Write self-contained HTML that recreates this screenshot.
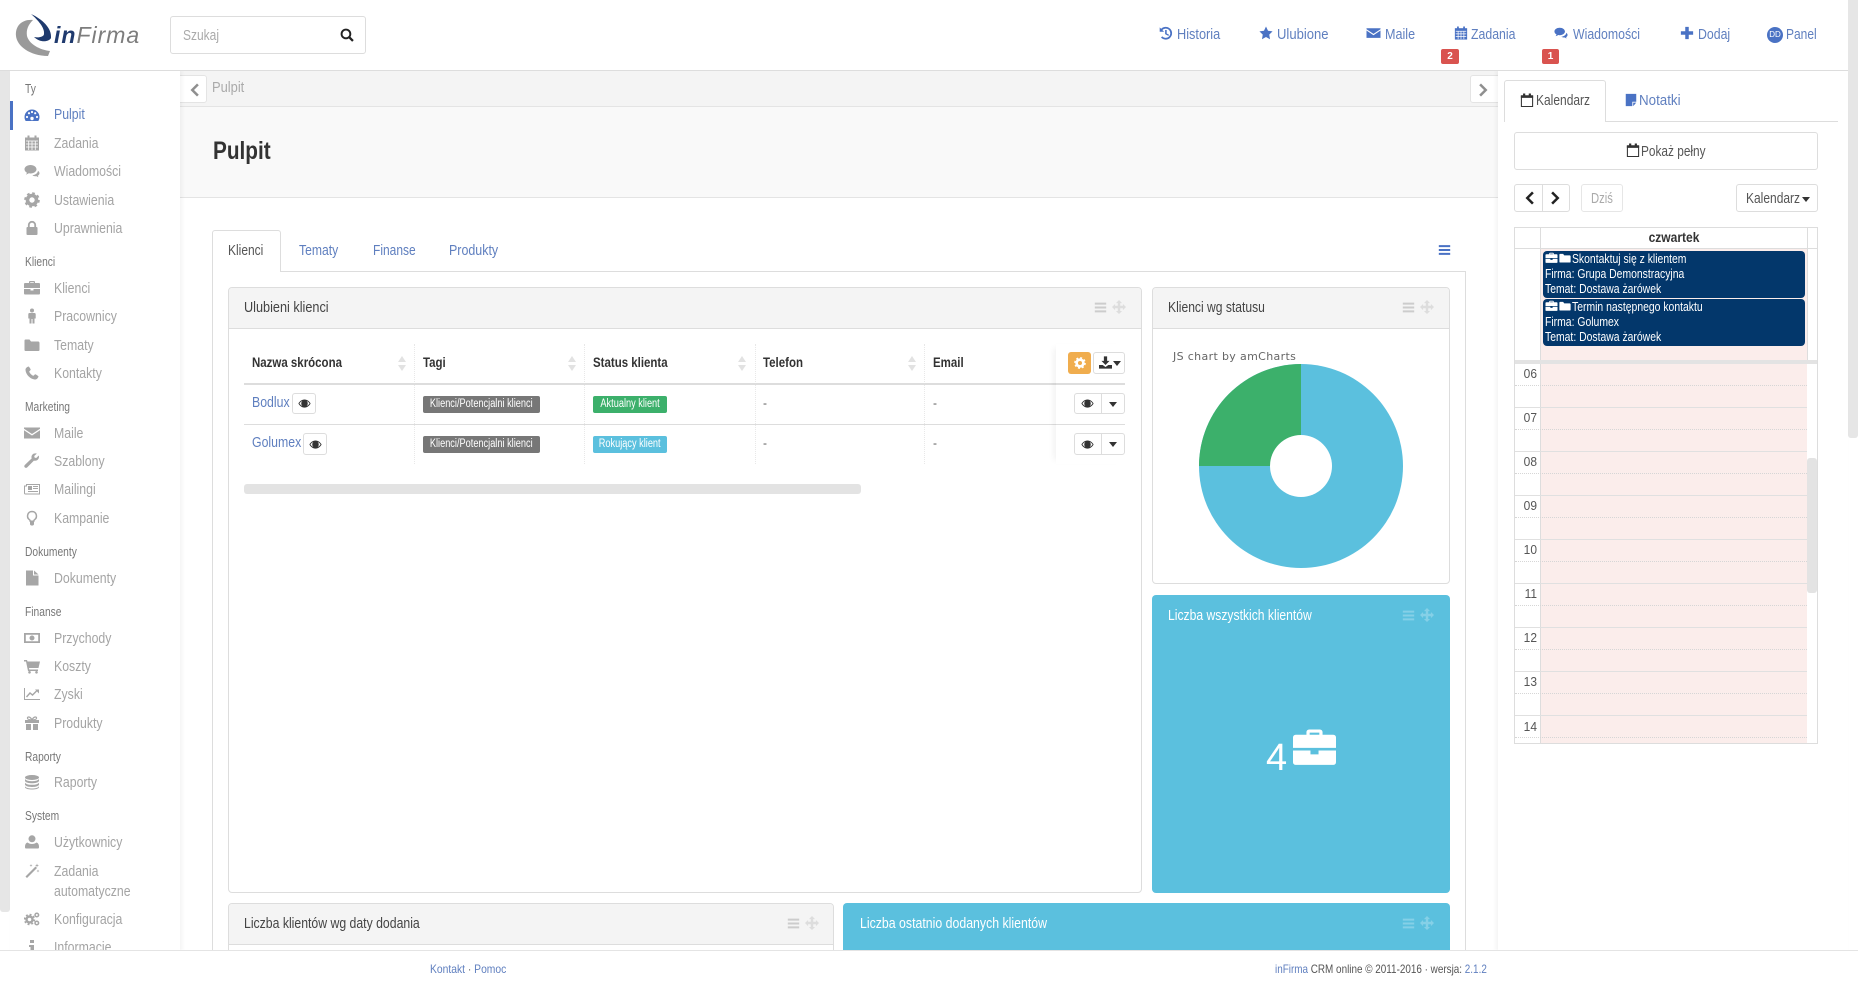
<!DOCTYPE html>
<html lang="pl"><head><meta charset="utf-8"><title>inFirma</title>
<style>
html,body{margin:0;padding:0;width:1858px;height:990px;overflow:hidden;background:#fff}
body{position:relative;font-family:"Liberation Sans",sans-serif;font-size:15px;color:#333}
.a{position:absolute;white-space:nowrap;line-height:20px;box-sizing:border-box}
svg.a{display:block;fill:currentColor;overflow:visible}
.s,.h,.n,.t,.th,.et,.x{transform:translateY(var(--y,1px)) scaleX(var(--k,.82));transform-origin:0 50%}
.s{left:54px;color:#a4a4a4;font-size:15px}
.h{left:25px;color:#777;font-size:12.5px;--k:.82}
.i{left:24px;width:16px;height:16px;color:#a6a6a6}
.n{color:#5f7fbf;font-size:15px;top:24px}
.ni{color:#4a72c4;width:14px;height:14px;top:26px}
.b{border:1px solid #ddd;border-radius:3px;background:#fff}
.p{border:1px solid #ddd;border-radius:4px;background:#fff}
.ph{background:#f4f4f4;border-bottom:1px solid #ddd}
.t{font-size:14.5px;color:#444;--k:.85}
.th{font-size:14px;font-weight:bold;color:#333;top:351px}
.l{background:#ddd}
.tag{height:17px;line-height:17px;border-radius:2px;color:#fff;font-size:11.5px;display:flex;justify-content:center}
.tag span{flex:none;display:block;transform:scaleX(.8)}
.ev{left:1543px;width:262px;background:#03376b;border-radius:4px}
.et{color:#fff;font-size:13px;line-height:16px;--k:.8;--y:0px}
.hr{left:1514px;width:26px;text-align:right;padding-right:3px;font-size:13px;color:#555;transform:scaleX(.92);transform-origin:88% 50%}
.ln{left:1515px;width:292px;height:1px;background:#e0e0e0}
.dt{left:1515px;width:292px;height:0;border-top:1px dotted #d6d6d6}
.vd{width:0;height:120px;top:344px;border-left:1px dotted #e8e8e8}
.ic{color:#ccc;width:13px;height:13px}
.mv{color:#ddd;width:14px;height:14px;margin-top:-1px}
</style></head><body>
<svg width="0" height="0" style="position:absolute"><defs>
<symbol id="dash" viewBox="0 0 16 16"><path d="M8 2.500A7.500 7.500 0 0 0 .5 10c0 1.500.4 2.900 1.200 4h12.600c.8-1.100 1.200-2.500 1.200-4A7.500 7.500 0 0 0 8 2.500z"/><g fill="#fff"><circle cx="3" cy="10" r="1.100"/><circle cx="5" cy="6.200" r="1.100"/><circle cx="8" cy="5" r="1.100"/><circle cx="13" cy="10" r="1.100"/><circle cx="11.200" cy="6.200" r="1.100"/><circle cx="8" cy="11.500" r="1.700"/></g></symbol>
<symbol id="cal" viewBox="0 0 16 16"><rect x="1" y="2.500" width="14" height="13"/><path fill="none" stroke="#fff" stroke-width=".8" d="M2 6h12M2 9h12M2 12h12M4.700 6v9M8 6v9M11.300 6v9"/><path d="M3.500.5h2v3h-2zM10.500.5h2v3h-2z"/></symbol>
<symbol id="calo" viewBox="0 0 16 16"><path fill="none" stroke="currentColor" stroke-width="1.200" d="M1.600 3.200h12.800v12.200H1.600z"/><path d="M1 3h14v2.500H1zM3.500.5H6V4H3.500zM10 .5h2.500V4H10z"/></symbol>
<symbol id="com" viewBox="0 0 16 16"><path d="M6.500 2C3.200 2 .5 3.900.5 6.300c0 1.400 1 2.700 2.400 3.400-.2.8-.6 1.400-1.100 1.900 1.100-.2 2.200-.7 3-1.300.6.100 1.100.2 1.700.2 3.300 0 6-1.900 6-4.200S9.800 2 6.500 2z"/><path d="M14 7.500c0 2.600-2.600 4.400-5.600 4.700.7.6 1.700 1 2.800 1 .4 0 .8 0 1.200-.1.6.5 1.400.9 2.100 1-.3-.4-.6-.8-.7-1.400 1-.5 1.700-1.400 1.700-2.400 0-1-.6-1.800-1.500-2.400z"/></symbol>
<symbol id="cog" viewBox="0 0 16 16"><circle cx="8" cy="8" r="4.500" fill="none" stroke="currentColor" stroke-width="3.600"/><circle cx="8" cy="8" r="6.600" fill="none" stroke="currentColor" stroke-width="2.400" stroke-dasharray="2.600 2.580"/></symbol>
<symbol id="lock" viewBox="0 0 16 16"><path fill="none" stroke="currentColor" stroke-width="1.800" d="M4.800 7.500V5a3.200 3.200 0 0 1 6.400 0v2.500"/><rect x="2.500" y="7" width="11" height="8" rx="1"/></symbol>
<symbol id="case" viewBox="0 0 16 16"><path fill-rule="evenodd" d="M5 3V2a1 1 0 0 1 1-1h4a1 1 0 0 1 1 1v1h4a1 1 0 0 1 1 1v4H0V4a1 1 0 0 1 1-1zM6.200 2.200V3h3.600v-.8z"/><path d="M0 9h6.500v1.500h3V9H16v4.500a1 1 0 0 1-1 1H1a1 1 0 0 1-1-1z"/></symbol>
<symbol id="male" viewBox="0 0 16 16"><circle cx="8" cy="2.500" r="2"/><path d="M5.500 5h5c.8 0 1.200.5 1.200 1.200v4.300h-1.200v5H8.500V11h-1v4.500h-2v-5H4.300V6.200C4.300 5.500 4.700 5 5.500 5z"/></symbol>
<symbol id="fold" viewBox="0 0 16 16"><path d="M1.500 2.500h4l1.500 2h7.500a1.500 1.500 0 0 1 1 1.200V13a1 1 0 0 1-1 1h-13a1 1 0 0 1-1-1V3.500a1 1 0 0 1 1-1z"/></symbol>
<symbol id="ph" viewBox="0 0 16 16"><path d="M4.500 1.500c-1 .2-3 1.600-3 3 0 5 5 10 10 10 1.400 0 2.800-2 3-3 .1-.4-3-2.400-3.400-2.200l-1.600 1.500C8 10.500 5.500 8 5.200 6.500l1.500-1.600C7 4.500 5 1.400 4.500 1.500z"/></symbol>
<symbol id="env" viewBox="0 0 16 16"><path d="M0 2.500h16v1.200L8 9 0 3.700z"/><path d="M0 5.200 8 10.500l8-5.300v8.300H0z"/></symbol>
<symbol id="wr" viewBox="0 0 16 16"><path d="M14.800 2.500 12.200 5 10.600 4.600 10.200 3 12.800.6c-1.700-.5-3.500-.1-4.400 1-1 1.100-1.200 2.600-.7 3.800L.8 12c-.7.7-.7 1.700 0 2.400.7.700 1.700.7 2.400 0l6.700-6.800c1.200.4 2.700.2 3.800-.8 1.200-1 1.600-2.700 1.100-4.300z"/></symbol>
<symbol id="news" viewBox="0 0 16 16"><path fill="none" stroke="currentColor" stroke-width="1" d="M2.500 3.500h13v9.500H1.500a1 1 0 0 1-1-1V5h2z"/><path d="M4 5h4v4H4zM9 5h5v1H9zM9 7h5v1H9zM4 10h10v1H4z"/></symbol>
<symbol id="bulb" viewBox="0 0 16 16"><path fill="none" stroke="currentColor" stroke-width="1.500" d="M8 1.500a4.500 4.500 0 0 0-2.500 8.200c.5.5.8 1 .8 1.600h3.400c0-.6.3-1.100.8-1.600A4.500 4.500 0 0 0 8 1.500z"/><path d="M6 12h4v2.500l-1 1H7l-1-1z"/></symbol>
<symbol id="file" viewBox="0 0 16 16"><path d="M2 .5h7v5h5.500v10H2zM10 .5l4.500 4H10z"/></symbol>
<symbol id="mon" viewBox="0 0 16 16"><path fill-rule="evenodd" d="M0 3h16v10H0zM1.800 4.800v6.400h12.400V4.800zM8 5.500a2.500 2.500 0 1 1 0 5 2.500 2.500 0 0 1 0-5z"/></symbol>
<symbol id="cart" viewBox="0 0 16 16"><path d="M0 2h3l.5 1.500H16l-1.500 6.500H5l.3 1.500H14V13H4L2 3.500H0z"/><circle cx="5.500" cy="14.300" r="1.300"/><circle cx="12.500" cy="14.300" r="1.300"/></symbol>
<symbol id="chart" viewBox="0 0 16 16"><path d="M0 2h1v11h15v1H0z"/><path fill="none" stroke="currentColor" stroke-width="1.400" d="M2.500 11 6 7l2.500 2L13 4.500"/><path d="M11 3.500h4v4z"/></symbol>
<symbol id="gift" viewBox="0 0 16 16"><path d="M1 5h14v3H1zM2 9h5v6H2zM9 9h5v6H9z"/><path fill="none" stroke="currentColor" stroke-width="1.200" d="M8 4.800C6 1 3 1.500 3.500 3.500c.3 1 2 1.300 4.500 1.300zm0 0c2-3.800 5-3.300 4.500-1.300-.3 1-2 1.300-4.500 1.300z"/></symbol>
<symbol id="db" viewBox="0 0 16 16"><ellipse cx="8" cy="3.500" rx="7" ry="2.500"/><path d="M1 5c1 1.600 4 2.200 7 2.200S14 6.600 15 5v2c-1 1.700-4 2.300-7 2.300S2 8.700 1 7zM1 8.600c1 1.700 4 2.200 7 2.200s6-.5 7-2.200v2.200c-1 1.700-4 2.200-7 2.200s-6-.5-7-2.200zM1 12.200c1 1.700 4 2.300 7 2.300s6-.6 7-2.300v1.300c-1 1.500-4 2-7 2s-6-.5-7-2z"/></symbol>
<symbol id="user" viewBox="0 0 16 16"><circle cx="8" cy="4.800" r="3.500"/><path d="M3.500 8.500c1.200 1 2.800 1.500 4.500 1.500s3.300-.5 4.500-1.500c1.700.5 2.500 2 2.500 4v1a1 1 0 0 1-1 1H2a1 1 0 0 1-1-1v-1c0-2 .8-3.500 2.500-4z"/></symbol>
<symbol id="magic" viewBox="0 0 16 16"><path d="M11.500 3.500 13 5 3 15l-1.500-1.500zM13 .5l.5 1.500 1.500.5-1.500.5-.5 1.500-.5-1.500-1.500-.5 1.500-.5zM7 1l.4 1.100 1.100.4-1.100.4L7 4l-.4-1.100-1.100-.4 1.100-.4zM14 6.500l.4 1.100 1.100.4-1.100.4-.4 1.100-.4-1.100-1.100-.4 1.100-.4z"/></symbol>
<symbol id="cogs" viewBox="0 0 16 16"><circle cx="5.500" cy="8.500" r="3" fill="none" stroke="currentColor" stroke-width="2.400"/><circle cx="5.500" cy="8.500" r="4.800" fill="none" stroke="currentColor" stroke-width="1.800" stroke-dasharray="1.900 1.860"/><circle cx="12.800" cy="4" r="1.800" fill="none" stroke="currentColor" stroke-width="1.500"/><circle cx="12.800" cy="12" r="1.800" fill="none" stroke="currentColor" stroke-width="1.500"/></symbol>
<symbol id="info" viewBox="0 0 16 16"><rect x="6" y="1" width="4" height="3"/><path d="M5 6h5v7h1.500v2H5v-2h1.500V8H5z"/></symbol>
<symbol id="eye" viewBox="0 0 16 16"><path fill-rule="evenodd" d="M8 3C4.500 3 1.800 5.500.5 8c1.300 2.500 4 5 7.500 5s6.200-2.500 7.500-5C14.200 5.500 11.500 3 8 3zM1.800 8C2.700 6.600 4 5.400 5.400 4.800A4 4 0 0 0 4 8a4 4 0 0 0 1.400 3.200C4 10.600 2.700 9.400 1.800 8zm12.400 0c-.9 1.400-2.200 2.600-3.600 3.200A4 4 0 0 0 12 8a4 4 0 0 0-1.400-3.200C12 5.400 13.300 6.600 14.200 8z"/></symbol>
<symbol id="dl" viewBox="0 0 16 16"><path d="M6 .5h4V6h3L8 11 3 6h3zM0 11h4.500L8 13.500 11.500 11H16v4.500H0z"/></symbol>
<symbol id="bars" viewBox="0 0 16 16"><path d="M1 2h14v2.500H1zM1 6.800h14v2.500H1zM1 11.500h14V14H1z"/></symbol>
<symbol id="move" viewBox="0 0 16 16"><path d="M8 0l3.500 3.500H9.400v3.100h3.100V4.500L16 8l-3.500 3.500V9.400H9.400v3.100h2.100L8 16l-3.500-3.500h2.100V9.400H3.500v2.100L0 8l3.500-3.500v2.100h3.100V3.500H4.500z"/></symbol>
<symbol id="star" viewBox="0 0 16 16"><path d="M8 .5l2.300 4.900 5.200.7-3.800 3.700.9 5.300L8 12.600l-4.600 2.500.9-5.300L.5 6.100l5.200-.7z"/></symbol>
<symbol id="hist" viewBox="0 0 16 16"><path fill="none" stroke="currentColor" stroke-width="2" d="M2.800 4.200A6.300 6.300 0 1 1 3 12.500"/><path d="M.8 1.500v5h5zM7 4.500h1.800v4l2.700 1.500-.8 1.300L7 9.300z"/></symbol>
<symbol id="plus" viewBox="0 0 16 16"><path d="M6 1h4v5h5v4h-5v5H6v-5H1V6h5z"/></symbol>
<symbol id="srch" viewBox="0 0 16 16"><circle cx="6.800" cy="6.800" r="5" fill="none" stroke="currentColor" stroke-width="2.200"/><path fill="none" stroke="currentColor" stroke-width="2.600" d="M10.500 10.500l4.300 4.300"/></symbol>
<symbol id="note" viewBox="0 0 16 16"><path d="M2 1h12v9H9.500v5H2zM10.500 11H14l-3.500 4z"/></symbol>
<symbol id="cl" viewBox="0 0 10 16"><path d="M8 1.500 9.800 3.300 5 8l4.800 4.700L8 14.500 1.500 8z"/></symbol>
<symbol id="cr" viewBox="0 0 10 16"><path d="M2 1.500 .2 3.300 5 8 .2 12.700 2 14.500 8.500 8z"/></symbol>
</defs></svg>

<!-- scroll strips -->
<div class="a" style="left:1848px;top:0;width:10px;height:438px;background:#e6e6e6;border-radius:0 0 3px 3px"></div>
<div class="a" style="left:0;top:71px;width:10px;height:841px;background:#e6e6e6;border-radius:0 0 3px 3px"></div>

<!-- main background bands -->
<div class="a" style="left:180px;top:71px;width:1318px;height:36px;background:#f4f4f4;border-bottom:1px solid #e4e4e4"></div>
<div class="a" style="left:180px;top:107px;width:1318px;height:91px;background:#f9f9f9;border-bottom:1px solid #e4e4e4"></div>
<div class="a x" style="left:212px;top:77px;color:#aaa;font-size:15px;--k:.86">Pulpit</div>
<div class="a x" style="left:213px;top:135px;font-size:25px;line-height:30px;font-weight:bold;color:#333;--k:.83">Pulpit</div>
<div class="a" style="left:170px;top:75px;width:37px;height:28px;background:#fff;border:1px solid #e4e4e4;border-radius:0 3px 3px 0"></div>
<svg class="a" style="left:189px;top:82px;width:10px;height:16px;color:#8f8f8f"><use href="#cl"/></svg>
<div class="a" style="left:1470px;top:75px;width:40px;height:28px;background:#fff;border:1px solid #e4e4e4;border-radius:3px 0 0 3px"></div>
<svg class="a" style="left:1479px;top:82px;width:10px;height:16px;color:#8f8f8f"><use href="#cr"/></svg>

<!-- sidebar -->
<div class="a" style="left:10px;top:71px;width:170px;height:880px;background:#fff;box-shadow:2px 0 4px rgba(0,0,0,.05)"></div>
<div class="a" style="left:10px;top:101px;width:3px;height:29px;background:#4a72c4"></div>
<div class="a h" style="top:78px">Ty</div>
<svg class="a i" style="top:107px;color:#4a72c4"><use href="#dash"/></svg><div class="a s" style="top:104px;color:#5f7fbf">Pulpit</div>
<svg class="a i" style="top:135px"><use href="#cal"/></svg><div class="a s" style="top:133px">Zadania</div>
<svg class="a i" style="top:163px"><use href="#com"/></svg><div class="a s" style="top:161px">Wiadomości</div>
<svg class="a i" style="top:192px"><use href="#cog"/></svg><div class="a s" style="top:190px">Ustawienia</div>
<svg class="a i" style="top:220px"><use href="#lock"/></svg><div class="a s" style="top:218px">Uprawnienia</div>
<div class="a h" style="top:251px">Klienci</div>
<svg class="a i" style="top:280px"><use href="#case"/></svg><div class="a s" style="top:278px">Klienci</div>
<svg class="a i" style="top:308px"><use href="#male"/></svg><div class="a s" style="top:306px">Pracownicy</div>
<svg class="a i" style="top:337px"><use href="#fold"/></svg><div class="a s" style="top:335px">Tematy</div>
<svg class="a i" style="top:365px"><use href="#ph"/></svg><div class="a s" style="top:363px">Kontakty</div>
<div class="a h" style="top:396px">Marketing</div>
<svg class="a i" style="top:425px"><use href="#env"/></svg><div class="a s" style="top:423px">Maile</div>
<svg class="a i" style="top:453px"><use href="#wr"/></svg><div class="a s" style="top:451px">Szablony</div>
<svg class="a i" style="top:481px"><use href="#news"/></svg><div class="a s" style="top:479px">Mailingi</div>
<svg class="a i" style="top:510px"><use href="#bulb"/></svg><div class="a s" style="top:508px">Kampanie</div>
<div class="a h" style="top:541px">Dokumenty</div>
<svg class="a i" style="top:570px"><use href="#file"/></svg><div class="a s" style="top:568px">Dokumenty</div>
<div class="a h" style="top:601px">Finanse</div>
<svg class="a i" style="top:630px"><use href="#mon"/></svg><div class="a s" style="top:628px">Przychody</div>
<svg class="a i" style="top:658px"><use href="#cart"/></svg><div class="a s" style="top:656px">Koszty</div>
<svg class="a i" style="top:686px"><use href="#chart"/></svg><div class="a s" style="top:684px">Zyski</div>
<svg class="a i" style="top:715px"><use href="#gift"/></svg><div class="a s" style="top:713px">Produkty</div>
<div class="a h" style="top:746px">Raporty</div>
<svg class="a i" style="top:774px"><use href="#db"/></svg><div class="a s" style="top:772px">Raporty</div>
<div class="a h" style="top:805px">System</div>
<svg class="a i" style="top:834px"><use href="#user"/></svg><div class="a s" style="top:832px">Użytkownicy</div>
<svg class="a i" style="top:863px"><use href="#magic"/></svg><div class="a s" style="top:861px">Zadania</div><div class="a s" style="top:881px">automatyczne</div>
<svg class="a i" style="top:911px"><use href="#cogs"/></svg><div class="a s" style="top:909px">Konfiguracja</div>
<svg class="a i" style="top:939px"><use href="#info"/></svg><div class="a s" style="top:937px">Informacje</div>

<!-- tabs -->
<div class="a" style="left:212px;top:271px;width:1254px;height:700px;border:1px solid #ddd;border-bottom:0"></div>
<div class="a" style="left:212px;top:230px;width:69px;height:42px;background:#fff;border:1px solid #ddd;border-bottom:0;border-radius:3px 3px 0 0"></div>
<div class="a x" style="left:228px;top:240px;color:#555;--k:.8">Klienci</div>
<div class="a x" style="left:299px;top:240px;color:#5f7fbf;--k:.81">Tematy</div>
<div class="a x" style="left:373px;top:240px;color:#5f7fbf;--k:.8">Finanse</div>
<div class="a x" style="left:449px;top:240px;color:#5f7fbf;--k:.83">Produkty</div>
<svg class="a" style="left:1438px;top:243px;width:13px;height:14px;color:#4a72c4"><use href="#bars"/></svg>

<!-- Ulubieni klienci -->
<div class="a p" style="left:228px;top:287px;width:914px;height:606px"></div>
<div class="a ph" style="left:229px;top:288px;width:912px;height:41px;border-radius:3px 3px 0 0"></div>
<div class="a t" style="left:244px;top:297px;--k:.875">Ulubieni klienci</div>
<svg class="a ic" style="left:1094px;top:301px"><use href="#bars"/></svg>
<svg class="a ic mv" style="left:1112px;top:301px"><use href="#move"/></svg>
<div class="a th" style="left:252px">Nazwa skrócona</div>
<div class="a th" style="left:423px">Tagi</div>
<div class="a th" style="left:593px">Status klienta</div>
<div class="a th" style="left:763px">Telefon</div>
<div class="a th" style="left:933px">Email</div>
<div class="a vd" style="left:414px"></div><div class="a vd" style="left:584px"></div><div class="a vd" style="left:755px"></div><div class="a vd" style="left:924px"></div>
<svg class="a" style="left:397px;top:356px;width:10px;height:15px;color:#e2e2e2"><path d="M5 0l4 6H1zM5 15l4-6H1z"/></svg>
<svg class="a" style="left:567px;top:356px;width:10px;height:15px;color:#e2e2e2"><path d="M5 0l4 6H1zM5 15l4-6H1z"/></svg>
<svg class="a" style="left:737px;top:356px;width:10px;height:15px;color:#e2e2e2"><path d="M5 0l4 6H1zM5 15l4-6H1z"/></svg>
<svg class="a" style="left:907px;top:356px;width:10px;height:15px;color:#e2e2e2"><path d="M5 0l4 6H1zM5 15l4-6H1z"/></svg>
<div class="a l" style="left:244px;top:383px;width:881px;height:2px"></div>
<div class="a l" style="left:244px;top:424px;width:881px;height:1px"></div>
<div class="a x" style="left:252px;top:392px;color:#5f7fbf">Bodlux</div>
<div class="a b" style="left:292px;top:393px;width:24px;height:21px"></div><svg class="a" style="left:298px;top:397px;width:13px;height:13px;color:#333"><use href="#eye"/></svg>
<div class="a x" style="left:252px;top:432px;color:#5f7fbf">Golumex</div>
<div class="a b" style="left:303px;top:433px;width:24px;height:22px"></div><svg class="a" style="left:309px;top:438px;width:13px;height:13px;color:#333"><use href="#eye"/></svg>
<div class="a tag" style="left:423px;top:396px;width:117px;background:#777"><span>Klienci/Potencjalni klienci</span></div>
<div class="a tag" style="left:423px;top:436px;width:117px;background:#777"><span>Klienci/Potencjalni klienci</span></div>
<div class="a tag" style="left:593px;top:396px;width:74px;background:#3cb06b"><span>Aktualny klient</span></div>
<div class="a tag" style="left:593px;top:436px;width:74px;background:#5bc0de"><span>Rokujący klient</span></div>
<div class="a" style="left:763px;top:393px;color:#555;font-size:12px">-</div><div class="a" style="left:933px;top:393px;color:#555;font-size:12px">-</div>
<div class="a" style="left:763px;top:433px;color:#555;font-size:12px">-</div><div class="a" style="left:933px;top:433px;color:#555;font-size:12px">-</div>
<div class="a" style="left:1056px;top:344px;width:72px;height:120px;box-shadow:-6px 0 6px -4px rgba(0,0,0,.06)"></div>
<div class="a" style="left:1068px;top:352px;width:23px;height:22px;background:#f0ad4e;border-radius:3px"></div>
<svg class="a" style="left:1074px;top:357px;width:12px;height:12px;color:#fff"><use href="#cog"/></svg>
<div class="a b" style="left:1093px;top:352px;width:32px;height:22px"></div>
<svg class="a" style="left:1099px;top:356px;width:13px;height:13px;color:#333"><use href="#dl"/></svg>
<svg class="a" style="left:1113px;top:361px;width:8px;height:5px;color:#333"><path d="M0 0h8L4 5z"/></svg>
<div class="a b" style="left:1074px;top:393px;width:51px;height:21px"></div><div class="a l" style="left:1101px;top:393px;width:1px;height:21px"></div>
<svg class="a" style="left:1081px;top:397px;width:13px;height:13px;color:#333"><use href="#eye"/></svg>
<svg class="a" style="left:1109px;top:402px;width:8px;height:5px;color:#333"><path d="M0 0h8L4 5z"/></svg>
<div class="a b" style="left:1074px;top:433px;width:51px;height:22px"></div><div class="a l" style="left:1101px;top:433px;width:1px;height:22px"></div>
<svg class="a" style="left:1081px;top:438px;width:13px;height:13px;color:#333"><use href="#eye"/></svg>
<svg class="a" style="left:1109px;top:442px;width:8px;height:5px;color:#333"><path d="M0 0h8L4 5z"/></svg>
<div class="a" style="left:244px;top:484px;width:617px;height:10px;background:#e3e3e3;border-radius:3px"></div>

<!-- Klienci wg statusu -->
<div class="a p" style="left:1152px;top:287px;width:298px;height:297px"></div>
<div class="a ph" style="left:1153px;top:288px;width:296px;height:41px;border-radius:3px 3px 0 0"></div>
<div class="a t" style="left:1168px;top:297px;--k:.835">Klienci wg statusu</div>
<svg class="a ic" style="left:1402px;top:301px"><use href="#bars"/></svg>
<svg class="a ic mv" style="left:1420px;top:301px"><use href="#move"/></svg>
<div class="a" style="left:1173px;top:347px;font-family:'DejaVu Sans',sans-serif;font-size:11px;letter-spacing:.35px;color:#666">JS chart by amCharts</div>
<svg class="a" style="left:1199px;top:364px;width:204px;height:204px" viewBox="0 0 204 204"><circle cx="102" cy="102" r="102" fill="#5bc0de"/><path d="M102 102V0A102 102 0 0 0 0 102z" fill="#3cb06b"/><circle cx="102" cy="102" r="31" fill="#fff"/></svg>

<!-- Liczba wszystkich -->
<div class="a" style="left:1152px;top:595px;width:298px;height:298px;background:#5bc0de;border-radius:4px"></div>
<div class="a x" style="left:1168px;top:605px;color:#fff;font-size:15px;--k:.81">Liczba wszystkich klientów</div>
<svg class="a ic" style="left:1402px;top:609px;color:#85d0e7"><use href="#bars"/></svg>
<svg class="a ic mv" style="left:1420px;top:609px;color:#85d0e7"><use href="#move"/></svg>
<div class="a" style="left:1266px;top:736px;color:#fff;font-size:38px;line-height:44px">4</div>
<svg class="a" style="left:1293px;top:729px;width:43px;height:38px;color:#fff" viewBox="0 0 16 14.500" preserveAspectRatio="none"><use href="#case" width="16" height="16" y="-.8"/></svg>

<!-- bottom panels -->
<div class="a p" style="left:228px;top:903px;width:606px;height:60px"></div>
<div class="a ph" style="left:229px;top:904px;width:604px;height:41px;border-radius:3px 3px 0 0"></div>
<div class="a t" style="left:244px;top:913px;--k:.845">Liczba klientów wg daty dodania</div>
<svg class="a ic" style="left:787px;top:917px"><use href="#bars"/></svg>
<svg class="a ic mv" style="left:805px;top:917px"><use href="#move"/></svg>
<div class="a" style="left:843px;top:903px;width:607px;height:60px;background:#5bc0de;border-radius:4px"></div>
<div class="a x" style="left:860px;top:913px;color:#fff;font-size:14.5px;--k:.85">Liczba ostatnio dodanych klientów</div>
<svg class="a ic" style="left:1402px;top:917px;color:#85d0e7"><use href="#bars"/></svg>
<svg class="a ic mv" style="left:1420px;top:917px;color:#85d0e7"><use href="#move"/></svg>

<!-- right panel -->
<div class="a" style="left:1498px;top:71px;width:350px;height:880px;background:#fff;box-shadow:-2px 0 4px rgba(0,0,0,.05)"></div>
<div class="a l" style="left:1504px;top:121px;width:334px;height:1px"></div>
<div class="a" style="left:1504px;top:80px;width:102px;height:42px;background:#fff;border:1px solid #ddd;border-bottom:0;border-radius:3px 3px 0 0"></div>
<svg class="a" style="left:1520px;top:92px;width:14px;height:16px;color:#333"><use href="#calo"/></svg>
<div class="a x" style="left:1536px;top:90px;color:#555;--k:.8">Kalendarz</div>
<svg class="a" style="left:1624px;top:92px;width:14px;height:16px;color:#4a72c4"><use href="#note"/></svg>
<div class="a x" style="left:1639px;top:90px;color:#5f7fbf;--k:.89">Notatki</div>
<div class="a b" style="left:1514px;top:132px;width:304px;height:38px"></div>
<svg class="a" style="left:1626px;top:142px;width:14px;height:16px;color:#333"><use href="#calo"/></svg>
<div class="a x" style="left:1641px;top:141px;color:#555;--k:.79">Pokaż pełny</div>
<div class="a b" style="left:1514px;top:184px;width:56px;height:28px"></div><div class="a l" style="left:1542px;top:184px;width:1px;height:28px"></div>
<svg class="a" style="left:1524px;top:190px;width:10px;height:16px;color:#222"><use href="#cl"/></svg>
<svg class="a" style="left:1551px;top:190px;width:10px;height:16px;color:#222"><use href="#cr"/></svg>
<div class="a b" style="left:1581px;top:184px;width:42px;height:28px;border-color:#e6e6e6"></div>
<div class="a x" style="left:1591px;top:188px;color:#aaa;--k:.75">Dziś</div>
<div class="a b" style="left:1736px;top:184px;width:82px;height:28px"></div>
<div class="a x" style="left:1746px;top:188px;color:#555;--k:.8">Kalendarz</div>
<svg class="a" style="left:1802px;top:197px;width:8px;height:5px;color:#333"><path d="M0 0h8L4 5z"/></svg>

<!-- calendar -->
<div class="a" style="left:1514px;top:227px;width:304px;height:517px;border:1px solid #ddd"></div>
<div class="a" style="left:1541px;top:248px;width:266px;height:112px;background:#fbedeb"></div>
<div class="a" style="left:1541px;top:364px;width:266px;height:379px;background:#fbedeb"></div>
<div class="a l" style="left:1540px;top:228px;width:1px;height:515px"></div>
<div class="a l" style="left:1807px;top:228px;width:1px;height:132px"></div>
<div class="a l" style="left:1515px;top:248px;width:302px;height:1px"></div>
<div class="a" style="left:1515px;top:360px;width:302px;height:4px;background:#e3e3e3"></div>
<div class="a" style="left:1541px;top:227px;width:266px;text-align:center;font-weight:bold;font-size:14px;color:#333;transform:scaleX(.86)">czwartek</div>
<div class="a ev" style="top:251px;height:47px"></div>
<svg class="a" style="left:1545px;top:252px;width:13px;height:12px;color:#fff"><use href="#case"/></svg><svg class="a" style="left:1559px;top:252px;width:12px;height:12px;color:#fff"><use href="#fold"/></svg>
<div class="a et" style="left:1572px;top:251px">Skontaktuj się z klientem</div>
<div class="a et" style="left:1545px;top:266px">Firma: Grupa Demonstracyjna</div>
<div class="a et" style="left:1545px;top:281px">Temat: Dostawa żarówek</div>
<div class="a ev" style="top:299px;height:47px"></div>
<svg class="a" style="left:1545px;top:300px;width:13px;height:12px;color:#fff"><use href="#case"/></svg><svg class="a" style="left:1559px;top:300px;width:12px;height:12px;color:#fff"><use href="#fold"/></svg>
<div class="a et" style="left:1572px;top:299px">Termin następnego kontaktu</div>
<div class="a et" style="left:1545px;top:314px">Firma: Golumex</div>
<div class="a et" style="left:1545px;top:329px">Temat: Dostawa żarówek</div>

<div class="a dt" style="top:385px"></div><div class="a ln" style="top:407px"></div>
<div class="a dt" style="top:429px"></div><div class="a ln" style="top:451px"></div>
<div class="a dt" style="top:473px"></div><div class="a ln" style="top:495px"></div>
<div class="a dt" style="top:517px"></div><div class="a ln" style="top:539px"></div>
<div class="a dt" style="top:561px"></div><div class="a ln" style="top:583px"></div>
<div class="a dt" style="top:605px"></div><div class="a ln" style="top:627px"></div>
<div class="a dt" style="top:649px"></div><div class="a ln" style="top:671px"></div>
<div class="a dt" style="top:693px"></div><div class="a ln" style="top:715px"></div>
<div class="a dt" style="top:737px"></div>
<div class="a hr" style="top:364px">06</div><div class="a hr" style="top:408px">07</div><div class="a hr" style="top:452px">08</div><div class="a hr" style="top:496px">09</div><div class="a hr" style="top:540px">10</div><div class="a hr" style="top:584px">11</div><div class="a hr" style="top:628px">12</div><div class="a hr" style="top:672px">13</div><div class="a hr" style="top:717px">14</div>
<div class="a" style="left:1807px;top:458px;width:10px;height:135px;background:#e3e3e3;border-radius:3px"></div>

<!-- header -->
<div class="a" style="left:0;top:0;width:1848px;height:71px;background:#fff;border-bottom:1px solid #ddd"></div>
<svg class="a" style="left:12px;top:10px;width:44px;height:50px" viewBox="12 10 44 50"><path fill="#9a9a9a" d="M33 20C22 19 15 26 16 36c1 10 14 20 32 20l2-5C40 50 29 44 27 36c-1-6 1-11 6-16z"/><path fill="#1f3a6e" d="M31 14c11 5 21 14 20 24-2 4-11 5-17-1 4 1 10 0 10-3 1-6-6-14-13-20z"/></svg>
<div class="a" style="left:54px;top:21px;font-style:italic;font-size:23px;letter-spacing:1px;line-height:28px;color:#7d7d7d"><b style="color:#1f3a6e;font-weight:bold">in</b>Firma</div>
<div class="a" style="left:170px;top:16px;width:196px;height:38px;border:1px solid #ddd;border-radius:3px;background:#fff"></div>
<div class="a x" style="left:183px;top:25px;color:#aaa;--k:.8">Szukaj</div>
<svg class="a" style="left:340px;top:28px;width:14px;height:14px;color:#222"><use href="#srch"/></svg>

<svg class="a ni" style="left:1159px"><use href="#hist"/></svg><div class="a n" style="left:1177px;--k:.85">Historia</div>
<svg class="a ni" style="left:1259px"><use href="#star"/></svg><div class="a n" style="left:1277px;--k:.87">Ulubione</div>
<svg class="a ni" style="left:1366px;width:15px"><use href="#env"/></svg><div class="a n" style="left:1385px;--k:.84">Maile</div>
<svg class="a ni" style="left:1454px"><use href="#cal"/></svg><div class="a n" style="left:1471px">Zadania</div>
<svg class="a ni" style="left:1554px"><use href="#com"/></svg><div class="a n" style="left:1573px">Wiadomości</div>
<svg class="a ni" style="left:1680px"><use href="#plus"/></svg><div class="a n" style="left:1698px">Dodaj</div>
<div class="a" style="left:1767px;top:27px;width:16px;height:16px;border-radius:50%;background:#4a72c4;color:#fff;font-size:8px;line-height:16px;text-align:center">DD</div>
<div class="a n" style="left:1786px;--k:.8">Panel</div>
<div class="a" style="left:1441px;top:49px;width:18px;height:15px;background:#d9534f;border-radius:2px;color:#fff;font-size:10px;line-height:15px;text-align:center;font-weight:bold">2</div>
<div class="a" style="left:1542px;top:49px;width:17px;height:15px;background:#d9534f;border-radius:2px;color:#fff;font-size:10px;line-height:15px;text-align:center;font-weight:bold">1</div>

<!-- footer -->
<div class="a" style="left:0;top:950px;width:1858px;height:40px;background:#fff;border-top:1px solid #e4e4e4"></div>
<div class="a x" style="left:430px;top:959px;font-size:12px;color:#666;--k:.86;--y:0px"><span style="color:#5f7fbf">Kontakt</span> · <span style="color:#5f7fbf">Pomoc</span></div>
<div class="a x" style="left:1275px;top:959px;font-size:12px;color:#555;--k:.825;--y:0px"><span style="color:#5f7fbf">inFirma</span> CRM online © 2011-2016 · wersja: <span style="color:#5f7fbf">2.1.2</span></div>
</body></html>
